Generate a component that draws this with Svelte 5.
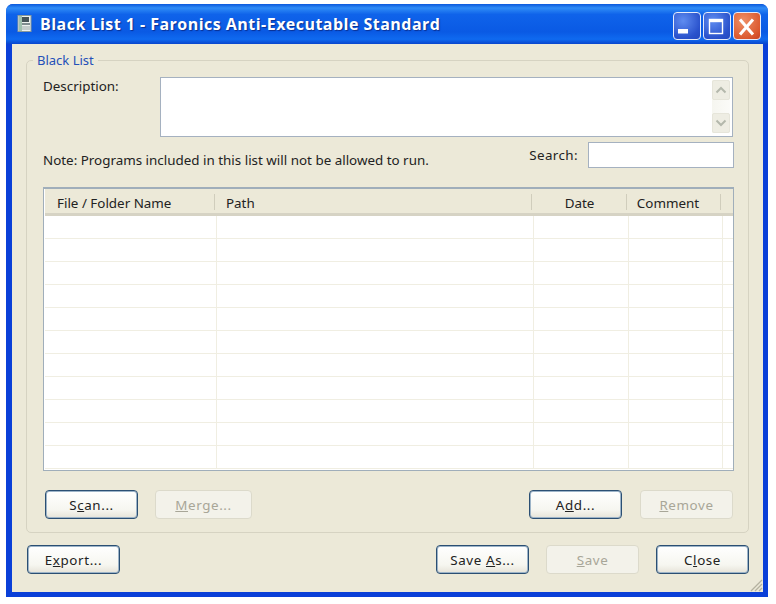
<script lang="ts">
  const columns = [
    { name: 'File / Folder Name', width: 171, kind: 'first' },
    { name: 'Path', width: 317, kind: 'path' },
    { name: 'Date', width: 95, kind: 'date' },
    { name: 'Comment', width: 94, kind: 'comment' },
  ];
  const rows = Array.from({ length: 11 }, (_, i) => i);
</script>

<div class="window">
  <header class="titlebar">
    <svg class="app-icon" width="16" height="18" viewBox="0 0 16 18">
      <rect x="1" y="0.5" width="13" height="16" fill="#eef1ef" stroke="#8a9a9a" />
      <rect x="2" y="1" width="3" height="15" fill="#9fc0ae" />
      <rect x="5" y="2" width="7" height="5" fill="#46545a" />
      <rect x="5" y="8" width="8" height="2" fill="#7f8c90" />
      <rect x="5" y="11" width="8" height="4" fill="#c4cccc" />
    </svg>
    <span class="title">Black List 1 - Faronics Anti-Executable Standard</span>
    <div class="caption-btns">
      <button class="cap" aria-label="Minimize">
        <svg width="26" height="26" viewBox="0 0 26 26"><rect x="4" y="16" width="10" height="4.5" fill="#fff" /></svg>
      </button>
      <button class="cap" aria-label="Maximize">
        <svg width="26" height="26" viewBox="0 0 26 26"><rect x="5.5" y="6.5" width="13" height="14" fill="none" stroke="#fff" stroke-width="1.4" /><rect x="5" y="6" width="14" height="3.2" fill="#fff" /></svg>
      </button>
      <button class="cap close" aria-label="Close">
        <svg width="26" height="26" viewBox="0 0 26 26"><path d="M6 6.5 L19 21.5 M19 6.5 L6 21.5" stroke="#fff" stroke-width="3" /></svg>
      </button>
    </div>
  </header>

  <div class="client">
    <fieldset class="group">
      <legend>Black List</legend>

      <div class="desc-row">
        <span class="desc-label">Description:</span>
        <div class="desc-box">
          <div class="scroll">
            <span class="arrow"><svg width="12" height="8" viewBox="0 0 12 8"><path d="M1.5 6.5 L6 2 L10.5 6.5" fill="none" stroke="#b4b8ac" stroke-width="2" /></svg></span>
            <span class="arrow"><svg width="12" height="8" viewBox="0 0 12 8"><path d="M1.5 1.5 L6 6 L10.5 1.5" fill="none" stroke="#b4b8ac" stroke-width="2" /></svg></span>
          </div>
        </div>
      </div>

      <div class="note-row">
        <span class="note">Note: Programs included in this list will not be allowed to run.</span>
        <div class="search">
          <span class="search-label">Search:</span>
          <div class="search-box"></div>
        </div>
      </div>

      <div class="list">
        <div class="list-head">
          {#each columns as col}
            <div class="th {col.kind}" style="width: {col.width}px">{col.name}</div>
          {/each}
        </div>
        <div class="list-body">
          {#each rows as r (r)}
            <div class="row">
              {#each columns as col}
                <div class="cell" style="width: {col.width}px"></div>
              {/each}
            </div>
          {/each}
        </div>
      </div>

      <div class="group-btns">
        <div class="btn-pair">
          <button class="btn">S<u>c</u>an...</button>
          <button class="btn wide" disabled><u>M</u>erge...</button>
        </div>
        <div class="btn-pair spaced">
          <button class="btn">A<u>d</u>d...</button>
          <button class="btn" disabled><u>R</u>emove</button>
        </div>
      </div>
    </fieldset>

    <div class="footer">
      <button class="btn">E<u>x</u>port...</button>
      <div class="btn-pair">
        <button class="btn">Save <u>A</u>s...</button>
        <button class="btn" disabled><u>S</u>ave</button>
        <button class="btn">C<u>l</u>ose</button>
      </div>
    </div>

    <svg class="grip" width="14" height="14" viewBox="0 0 14 14">
      <path d="M13 2 L2 13 M13 6 L6 13 M13 10 L10 13" stroke="#b5b2a0" stroke-width="1.3" />
    </svg>
  </div>
</div>

<style>
  :global(body) {
    margin: 0;
    background: #fff;
  }
  .window {
    box-sizing: border-box;
    width: 762px;
    height: 593px;
    margin: 4px 0 0 6px;
    display: flex;
    flex-direction: column;
    background: #0a3fd8;
    border-radius: 7px 7px 0 0;
    font-family: 'Noto Sans', sans-serif;
    font-size: 13.4px;
    color: #222;
  }
  .titlebar {
    height: 40px;
    flex: none;
    display: flex;
    align-items: center;
    padding: 0 7px 0 11px;
    gap: 7px;
    border-radius: 7px 7px 0 0;
    background: linear-gradient(to bottom, #0a58dc 0, #2f8cf6 10%, #0f63ea 26%, #0a5ae4 70%, #0f6af0 88%, #0845cc 100%);
  }
  .app-icon {
    flex: none;
  }
  .title {
    flex: 1;
    color: #fff;
    font-family: 'Open Sans', sans-serif;
    font-weight: 700;
    font-size: 16px;
    letter-spacing: 0.47px;
    text-shadow: 1px 1px 1px #0a2f90;
  }
  .caption-btns {
    display: flex;
    gap: 2px;
    margin-top: 3px;
  }
  .cap {
    width: 28px;
    height: 28px;
    padding: 0;
    display: flex;
    align-items: center;
    justify-content: center;
    border: 1px solid #e6ecfa;
    border-radius: 4px;
    background: radial-gradient(circle at 35% 30%, #5f8cf0, #2a52cc 70%, #2348c0);
  }
  .cap.close {
    background: radial-gradient(circle at 35% 30%, #ee8f66, #dc5a30 70%, #c84020);
  }
  .client {
    position: relative;
    flex: 1;
    margin: 0 5px 5px 6px;
    padding: 8px 14px 0;
    background: #ece9d8;
    display: flex;
    flex-direction: column;
  }
  .group {
    box-sizing: border-box;
    width: 723px;
    min-width: 0;
    height: 481px;
    margin: 0;
    padding: 8px 14px 0 16px;
    border: 1px solid #d6d3c2;
    border-radius: 5px;
  }
  legend {
    margin-left: -10px;
    padding: 0 4px;
    color: #2450b8;
    font-size: 13px;
    line-height: 17px;
  }
  .desc-row {
    display: flex;
    height: 60px;
  }
  .desc-label {
    width: 117px;
    line-height: 18px;
  }
  .desc-box {
    box-sizing: border-box;
    width: 573px;
    border: 1px solid #a5b1c0;
    background: #fff;
    display: flex;
    justify-content: flex-end;
    padding: 2px 2px 3px 0;
  }
  .scroll {
    width: 18px;
    display: flex;
    flex-direction: column;
    justify-content: space-between;
    background: linear-gradient(to right, #f6f6f0, #fbfbf8);
  }
  .arrow {
    height: 20px;
    display: flex;
    align-items: center;
    justify-content: center;
    background: #eeede3;
    border: 1px solid #e6e5da;
    box-sizing: border-box;
    border-radius: 2px;
  }
  .note-row {
    display: flex;
    justify-content: space-between;
    height: 50px;
  }
  .note {
    padding-top: 14px;
    line-height: 18px;
  }
  .search {
    display: flex;
    gap: 10px;
    height: 26px;
    margin-top: 5px;
    line-height: 26px;
  }
  .search-label {
    letter-spacing: 0.4px;
  }
  .search-box {
    box-sizing: border-box;
    width: 146px;
    height: 26px;
    background: #fff;
    border: 1px solid #a5b1c0;
  }
  .list {
    box-sizing: border-box;
    height: 284px;
    background: #fff;
    border: 1px solid #a0aeba;
    border-top-width: 2px;
    padding-left: 1px;
    overflow: hidden;
  }
  .list-head {
    display: flex;
    height: 27px;
    background: #ece9d8;
    border-bottom: 3px solid #d6d3c4;
    box-sizing: border-box;
  }
  .list-body {
    padding-left: 1px;
  }
  .th {
    box-sizing: border-box;
    padding-top: 2px;
    line-height: 24px;
    position: relative;
  }
  .th.first {
    padding-left: 12px;
  }
  .th.path {
    padding-left: 10px;
  }
  .th.date {
    padding-right: 2px;
    text-align: center;
  }
  .th.comment {
    padding-right: 14px;
    text-align: center;
  }
  .th::after {
    content: '';
    position: absolute;
    right: 1px;
    top: 5px;
    bottom: 3px;
    width: 1px;
    background: #d0cdbc;
  }
  .row {
    display: flex;
    height: 23px;
    box-sizing: border-box;
    margin-left: -1px;
    padding-left: 1px;
    border-bottom: 1px solid #f0eee2;
  }
  .cell {
    box-sizing: border-box;
    border-right: 1px solid #f0eee2;
  }
  .group-btns {
    display: flex;
    justify-content: space-between;
    margin-top: 19px;
    padding: 0 1px 0 2px;
  }
  .btn-pair {
    display: flex;
    gap: 17px;
  }
  .btn-pair.spaced {
    gap: 18px;
  }
  .btn {
    box-sizing: border-box;
    width: 93px;
    height: 29px;
    padding: 0;
    font-family: inherit;
    font-size: 13.4px;
    letter-spacing: 0.6px;
    color: #222;
    border: 1px solid #2b4f73;
    border-radius: 4px;
    box-shadow: inset 0 0 0 1px #9db4c8;
    background: linear-gradient(to bottom, #fff, #f6f6f0 70%, #e6e3d8);
  }
  .btn.wide {
    width: 97px;
  }
  .btn:disabled {
    color: #a8a698;
    border-color: #dcdacb;
    box-shadow: none;
    background: #f3f2ea;
  }
  .footer {
    display: flex;
    justify-content: space-between;
    width: 722px;
    margin-top: 12px;
    margin-left: 1px;
  }
  .grip {
    position: absolute;
    right: 0;
    bottom: 0;
  }
</style>
